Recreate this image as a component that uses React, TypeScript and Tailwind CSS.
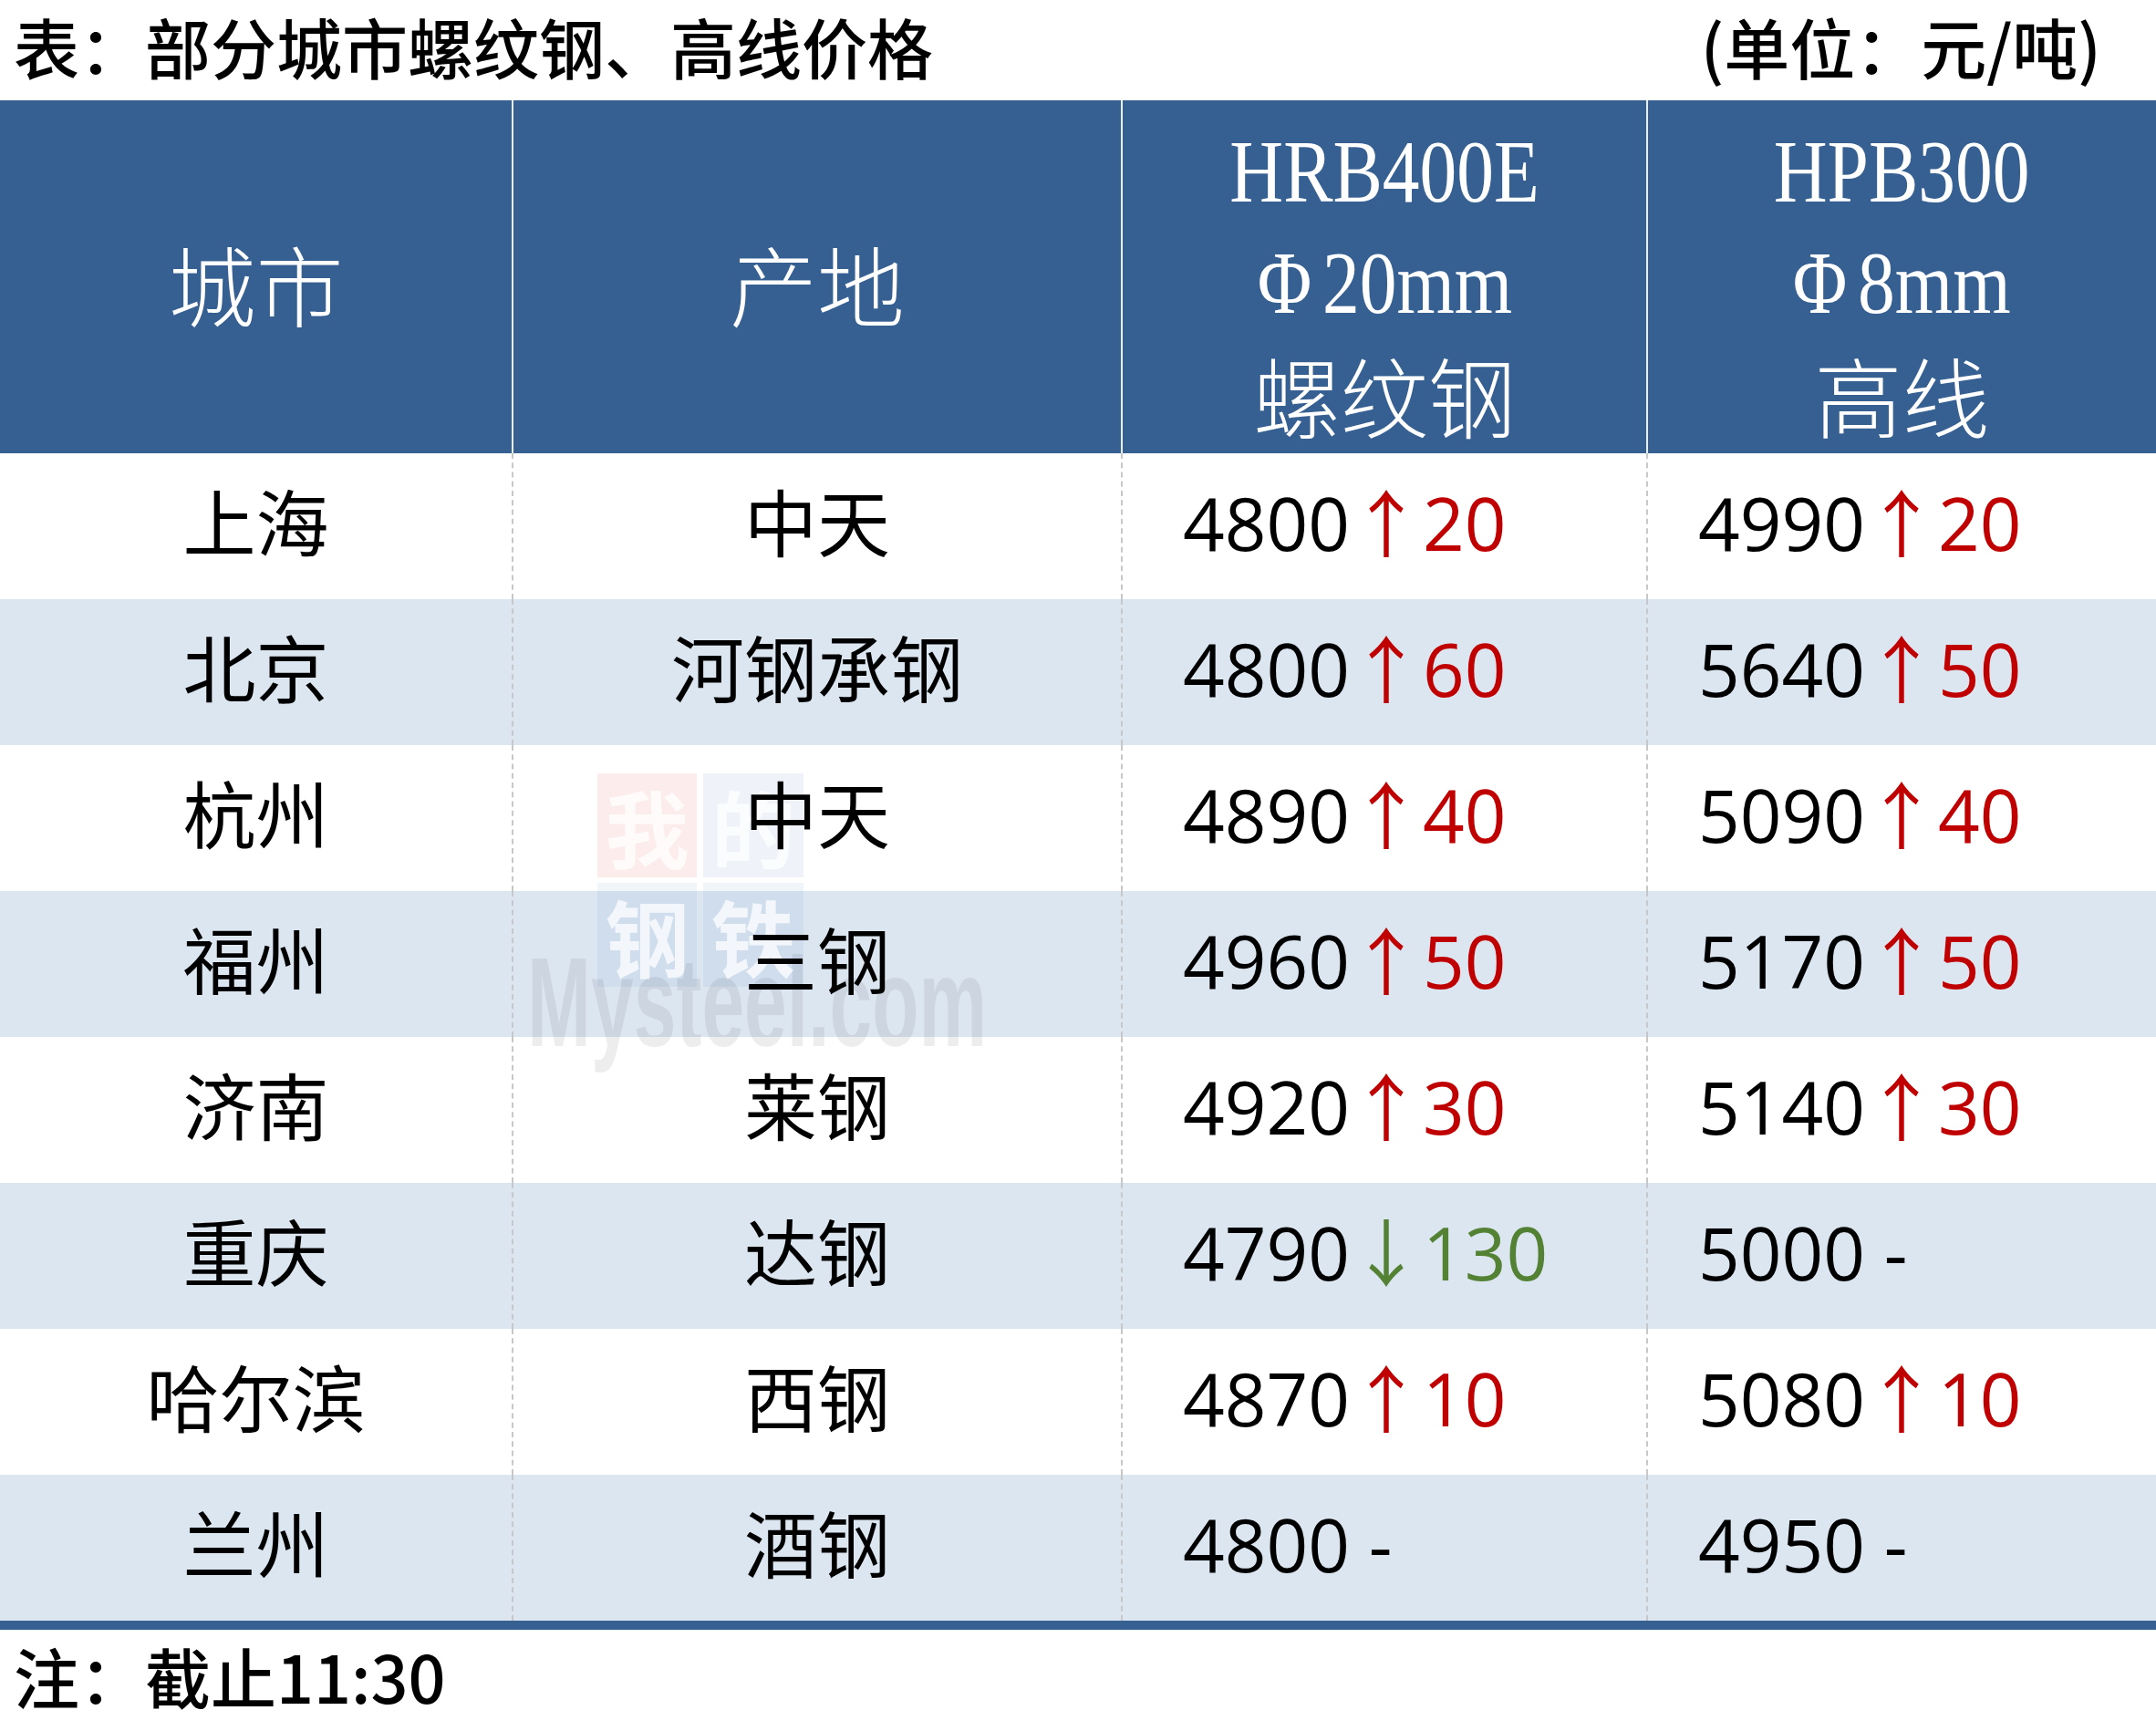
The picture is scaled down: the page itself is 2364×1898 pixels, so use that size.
import React from "react";

type Change = { dir: "up" | "down" | "flat"; v?: string };
type Row = { city: string; origin: string; p1: string; c1: Change; p2: string; c2: Change };

const rows: Row[] = [
  { city: "上海", origin: "中天", p1: "4800", c1: { dir: "up", v: "20" }, p2: "4990", c2: { dir: "up", v: "20" } },
  { city: "北京", origin: "河钢承钢", p1: "4800", c1: { dir: "up", v: "60" }, p2: "5640", c2: { dir: "up", v: "50" } },
  { city: "杭州", origin: "中天", p1: "4890", c1: { dir: "up", v: "40" }, p2: "5090", c2: { dir: "up", v: "40" } },
  { city: "福州", origin: "三钢", p1: "4960", c1: { dir: "up", v: "50" }, p2: "5170", c2: { dir: "up", v: "50" } },
  { city: "济南", origin: "莱钢", p1: "4920", c1: { dir: "up", v: "30" }, p2: "5140", c2: { dir: "up", v: "30" } },
  { city: "重庆", origin: "达钢", p1: "4790", c1: { dir: "down", v: "130" }, p2: "5000", c2: { dir: "flat" } },
  { city: "哈尔滨", origin: "西钢", p1: "4870", c1: { dir: "up", v: "10" }, p2: "5080", c2: { dir: "up", v: "10" } },
  { city: "兰州", origin: "酒钢", p1: "4800", c1: { dir: "flat" }, p2: "4950", c2: { dir: "flat" } },
];

function Price({ p, c }: { p: string; c: Change }) {
  return (
    <span className="relative z-10 whitespace-pre">
      {p}
      {c.dir === "up" && <span className="text-[#c00000]">↑{c.v}</span>}
      {c.dir === "down" && <span className="text-[#548235]">↓{c.v}</span>}
      {c.dir === "flat" && <span> -</span>}
    </span>
  );
}

function HeadLine({ children, cjk }: { children: React.ReactNode; cjk?: boolean }) {
  return (
    <div className="flex h-[122px] items-center justify-center">
      {cjk ? (
        <span className="text-[96px] font-light leading-none font-['Noto_Sans_CJK_SC',sans-serif]">{children}</span>
      ) : (
        <span className="inline-block scale-x-[0.84] text-[97px] leading-none font-['Liberation_Serif',serif]">
          {children}
        </span>
      )}
    </div>
  );
}

export default function App() {
  return (
    <div className="relative h-[1898px] w-[2364px] overflow-hidden bg-white text-black">
      {/* Title */}
      <div className="flex h-[110px] items-center justify-between pb-[10px] pl-[15px] pr-[60px] text-[72px] font-medium leading-[1.2] font-['Noto_Sans_CJK_SC',sans-serif]">
        <span>表：部分城市螺纹钢、高线价格</span>
        <span>(单位：元/吨)</span>
      </div>

      {/* Header */}
      <div className="grid h-[387px] grid-cols-[561px_668px_576px_559px] bg-[#376092] text-white">
        <div className="flex items-center justify-center pt-[12px] text-[96px] font-light leading-none font-['Noto_Sans_CJK_SC',sans-serif]">
          城市
        </div>
        <div className="flex items-center justify-center border-l-2 border-white/90 pt-[12px] text-[96px] font-light leading-none font-['Noto_Sans_CJK_SC',sans-serif]">
          产地
        </div>
        <div className="flex flex-col justify-center border-l-2 border-white/90 pt-[13px]">
          <HeadLine>HRB400E</HeadLine>
          <HeadLine>
            <span className="mr-[14px]">Φ</span>20mm
          </HeadLine>
          <HeadLine cjk>螺纹钢</HeadLine>
        </div>
        <div className="flex flex-col justify-center border-l-2 border-white/90 pt-[13px]">
          <HeadLine>HPB300</HeadLine>
          <HeadLine>
            <span className="mr-[14px]">Φ</span>8mm
          </HeadLine>
          <HeadLine cjk>高线</HeadLine>
        </div>
      </div>

      {/* Body */}
      <div className="text-[80px] leading-none font-['Open_Sans','Noto_Sans_CJK_SC',sans-serif]">
        {rows.map((r, i) => (
          <div
            key={r.city}
            className={`grid h-[160px] grid-cols-[561px_668px_576px_559px] ${i % 2 === 1 ? "bg-[#dce6f1]" : "bg-white"}`}
          >
            <div className="flex items-center justify-center pb-[8px]">
              <span className="relative z-10">{r.city}</span>
            </div>
            <div className="flex items-center justify-center border-l-2 border-dashed border-[#c8c8c8] pb-[8px]">
              <span className="relative z-10">{r.origin}</span>
            </div>
            <div className="flex items-center border-l-2 border-dashed border-[#c8c8c8] pb-[8px] pl-[66px]">
              <Price p={r.p1} c={r.c1} />
            </div>
            <div className="flex items-center border-l-2 border-dashed border-[#c8c8c8] pb-[8px] pl-[55px]">
              <Price p={r.p2} c={r.c2} />
            </div>
          </div>
        ))}
      </div>
      <div className="h-[10px] bg-[#376092]" />

      {/* Footer */}
      <div className="pl-[15px] pt-[14px] text-[72px] font-medium leading-none font-['Noto_Sans_CJK_SC',sans-serif]">
        注：截止11:30
      </div>

      {/* Watermark overlay */}
      <div className="pointer-events-none absolute left-[655px] top-[848px] z-0 grid grid-cols-[109px_110px] grid-rows-[114px_114px] gap-x-[7px] gap-y-[6px] text-[92px] font-bold leading-none text-white/75 font-['Noto_Sans_CJK_SC',serif]">
        <div className="flex items-center justify-center bg-[#e03a2e]/[0.09]">我</div>
        <div className="flex items-center justify-center bg-[#2f6bb3]/[0.08]">的</div>
        <div className="flex items-center justify-center bg-[#2f6bb3]/[0.07]">钢</div>
        <div className="flex items-center justify-center bg-[#2f6bb3]/[0.07]">铁</div>
      </div>
      <div className="pointer-events-none absolute left-[578px] top-[1029px] z-0 origin-left scale-x-[0.6] text-[140px] font-bold leading-none text-black/[0.07] font-['Liberation_Sans',sans-serif]">
        Mysteel.com
      </div>
    </div>
  );
}
